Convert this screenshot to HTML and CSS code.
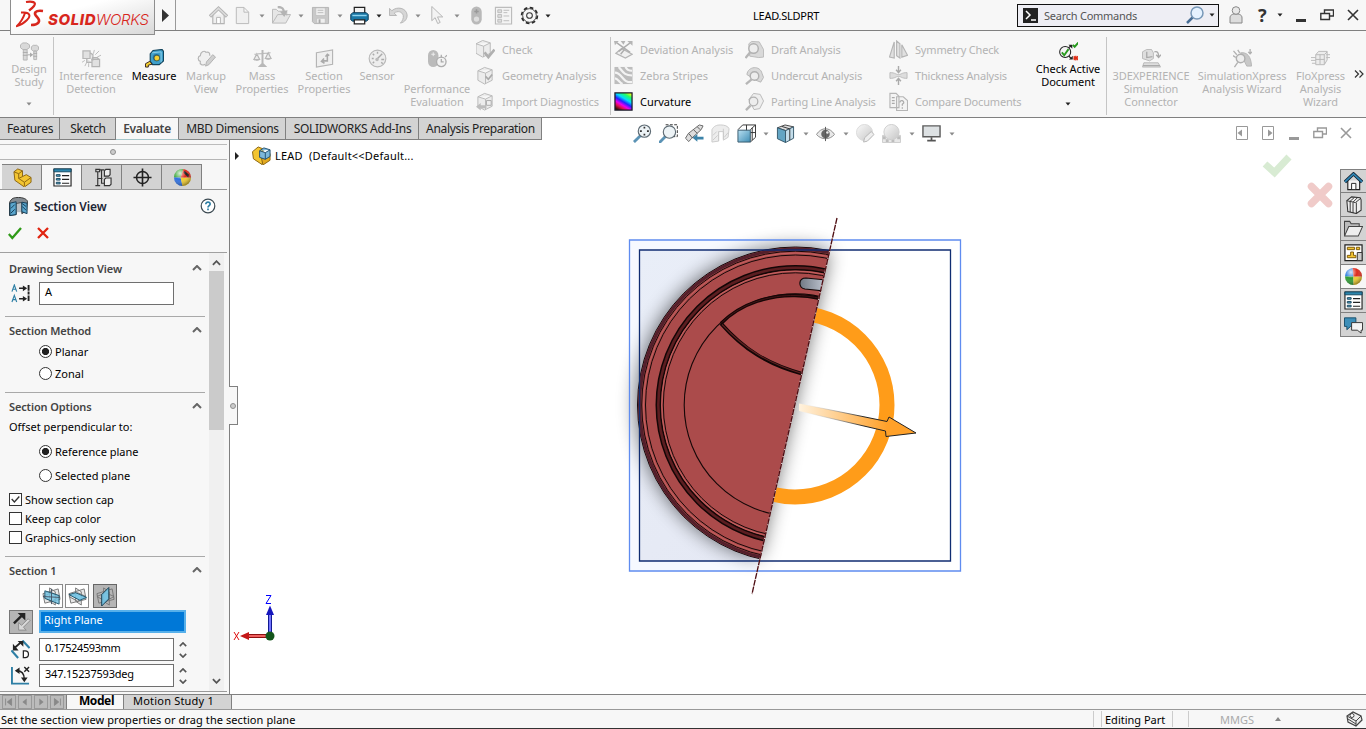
FILE: index.html
```html
<!DOCTYPE html>
<html lang="en">
<head>
<meta charset="utf-8">
<title>LEAD.SLDPRT</title>
<link rel="stylesheet" href="styles.css">
</head>
<body>
<svg class="defs" width="0" height="0">
  <defs>
    <linearGradient id="gBlue" x1="0" y1="0" x2="1" y2="1"><stop offset="0" stop-color="#b9e0f2"/><stop offset="1" stop-color="#3f8db4"/></linearGradient>
    <linearGradient id="gGrey" x1="0" y1="0" x2="1" y2="1"><stop offset="0" stop-color="#fafafa"/><stop offset="1" stop-color="#c6c6c6"/></linearGradient>
    <linearGradient id="gRain" x1=".8" y1="0" x2=".2" y2="1"><stop offset="0" stop-color="#df2"/><stop offset=".15" stop-color="#2f6"/><stop offset=".35" stop-color="#0df"/><stop offset=".52" stop-color="#22f"/><stop offset=".68" stop-color="#e0e"/><stop offset=".82" stop-color="#e01050"/><stop offset="1" stop-color="#310"/></linearGradient>
    <radialGradient id="gShine" cx=".35" cy=".25" r=".8"><stop offset="0" stop-color="#fff" stop-opacity=".8"/><stop offset=".45" stop-color="#fff" stop-opacity="0"/><stop offset="1" stop-color="#000" stop-opacity=".45"/></radialGradient>
  </defs>
  <symbol id="caret" viewBox="0 0 6 4"><path d="M.5 .5h5L3 3.5z" fill="currentColor"/></symbol>
  <symbol id="home" viewBox="0 0 20 20"><path d="M4 9v9.500h12V9" fill="#efefef" stroke="#b4b4b4" stroke-width="1.200"/><path d="M1 11 10 2.500l9 8.500" fill="none" stroke="#b4b4b4" stroke-width="3.600"/><path d="M1.500 10.500 10 2.500l8.500 8" fill="none" stroke="#dcdcdc" stroke-width="1.600"/><path d="M8 18v-6h4v6" fill="#fff" stroke="#b4b4b4"/></symbol>
  <symbol id="newdoc" viewBox="0 0 20 20"><path d="M3.500 1.500h8l5 5v12h-13zM11.500 1.500v5h5" fill="#f0f0f0" stroke="#b8b8b8"/></symbol>
  <symbol id="open" viewBox="0 0 20 20"><path d="M.5 18V3.500h4l2 2h9V10M.5 18 6 9h13.500l-5 9z" fill="#e6e6e6" stroke="#b8b8b8"/><path d="M6 1c5 0 6 2 6.500 5" fill="none" stroke="#b4b4b4" stroke-width="2.500"/><path d="m8.500 6 8-1.500-3.500 7z" fill="#b4b4b4"/></symbol>
  <symbol id="save" viewBox="0 0 20 20"><path d="M1.500 1.500h17v17h-15l-2-2z" fill="#c9c9c9" stroke="#b3b3b3"/><path d="M5 2h10v8H5zM6 13h9v5H6z" fill="#efefef" stroke="#bbb" stroke-width=".7"/><path d="M7 4.500h6M7 7h6" stroke="#bbb"/><path d="M8 14h2v4H8z" fill="#aaa"/></symbol>
  <symbol id="print" viewBox="0 0 20 20"><path d="M4.500 8V1.500h11V8z" fill="#f3f3f3" stroke="#222" stroke-width="1.300"/><path d="m.8 9 2-2h14.400l2 2v5.500l-2 1.500H2.800L.8 14.500z" fill="#1a78a6" stroke="#0f3c58" stroke-width="1"/><path d="M2.500 10h15" stroke="#8dd2ef" stroke-width="1.500"/><path d="M4.500 14.500h11v4.200h-11z" fill="#fff" stroke="#222" stroke-width="1.300"/></symbol>
  <symbol id="undo" viewBox="0 0 20 20"><path d="M.5 2.500V10H8L5.500 7.500C9 4.500 14 6 15 10c.5 3-1 6-3 8 5-1 7.500-5 7-9-1-7-10.500-9-16-4z" fill="#d6d6d6" stroke="#b5b5b5"/></symbol>
  <symbol id="select" viewBox="0 0 20 20"><path d="M4 .5v15l3.500-3.200 2.700 6.200 2.600-1.200-2.800-5.800h5.500z" fill="#f3f3f3" stroke="#b3b3b3"/></symbol>
  <symbol id="traffic" viewBox="0 0 20 20"><rect x="4.500" y=".5" width="11" height="19" rx="5.500" fill="#b9b9b9"/><path d="M10 3.500v4.500M7.700 5.700h4.600" stroke="#999" stroke-width="1.600"/><circle cx="10" cy="13.800" r="2.800" fill="#dedede"/></symbol>
  <symbol id="listopt" viewBox="0 0 20 20"><path d="M1.500 1.500h17v17.500h-17z" fill="#f4f4f4" stroke="#bcbcbc" stroke-width="1.200"/><path d="M4 4h4v3H4zM4 9h4v3H4zM4 14h4v3H4zM10 4.500h6M10 7h4M10 10.500h6M10 15.500h6" fill="#ddd" stroke="#bcbcbc"/></symbol>
  <symbol id="gear" viewBox="0 0 20 20"><circle cx="10" cy="10" r="8.300" fill="none" stroke="#2b2b2b" stroke-width="1.800" stroke-dasharray="3.900 2.619"/><circle cx="10" cy="10" r="7.200" fill="#f7f7f7" stroke="#2b2b2b" stroke-width=".9"/><circle cx="10" cy="10" r="3" fill="none" stroke="#333" stroke-width="1.100"/></symbol>
  <symbol id="bolts" viewBox="0 0 20 20"><path d="M.5 3 3 1h4l3 2v3L7 8H3L.5 6zM3.500 8h4v11h-4zM12 5l2-1.500h3.500l2 1.500v3l-2 1.500H14L12 8zM14.500 9.500h3v9h-3z" fill="#d9d9d9" stroke="#b5b5b5"/><path d="M3 11h5M3 14h5M14 12h4M14 15h4M8 13.500h4" stroke="#aaa"/><path d="m10.500 11 3.500 2.500-3.500 2.500z" fill="#aaa"/></symbol>
  <symbol id="interf" viewBox="0 0 20 20"><path d="M1 2h7.500v8H1zM10.500 11h8v7.500h-8zM8.500 4l3 2v6M10 12l1-3h5l2 2M5 10v4h5" fill="#e1e1e1" stroke="#b5b5b5" stroke-width="1.300"/><path d="m12 5 1-4M14 6l4-4M16 8.500l4-2M5 14l-2 4M7 15v4M3 12l-3 2" stroke="#bbb"/></symbol>
  <symbol id="measure" viewBox="0 0 20 20"><path d="M5.500 5 8.500 1.500l9.500-1 1.500 2v10L15 16.500H8L5.500 13z" fill="#3e9fca" stroke="#12445c" stroke-width="1.200"/><path d="m7.500 4 9.500-1v11" fill="none" stroke="#8fd0e8"/><circle cx="12" cy="9" r="3.800" fill="#2a7298"/><circle cx="12.500" cy="9.500" r="3" fill="#f3cf31" stroke="#244" stroke-width=".7"/><path d="M.5 15.500 5 13l2.500 3-4 1v2h-3z" fill="#f3cf31" stroke="#322"/></symbol>
  <symbol id="markup" viewBox="0 0 20 20"><path d="M8.500 16c-3 2-6 0-5-3-3-1-3-5 0-6 0-4 4-6 6-3.500 3-1 4 1 4 3.500" fill="#f0f0f0" stroke="#b5b5b5" stroke-width="1.200"/><path d="m9 18 1-4.500 6.500-7.500 3 2.500-7 8z" fill="#d0d0d0" stroke="#b0b0b0"/></symbol>
  <symbol id="scale" viewBox="0 0 20 20"><path d="M10 1v14M1.500 5.500 18.500 4M4 5 1 11h6zM16 4l-3 6h6z" fill="#ececec" stroke="#b5b5b5" stroke-width="1.200"/><path d="M9 1h2v14l4 4H5l4-4z" fill="#b8b8b8"/><path d="M.5 11h7c-1 2-6 2-7 0zM12.500 10h7c-1 2-6 2-7 0z" fill="#bdbdbd"/></symbol>
  <symbol id="secprop" viewBox="0 0 20 20"><path d="m1.500 4 17-3v15l-17 3z" fill="#efefef" stroke="#b5b5b5" stroke-width="1.200"/><path d="M13 6v6.500H7.500m2-2.500-2.700 3L10 15M11 8l2-2.500L15 7" fill="none" stroke="#aaa" stroke-width="1.600"/></symbol>
  <symbol id="sensor" viewBox="0 0 20 20"><circle cx="10" cy="10" r="8.800" fill="#ededed" stroke="#b8b8b8" stroke-width="1.200"/><path d="m9 11 6-6M10 3v2M4 10h2M14 11h3M5 5l1.500 1.500M5 15l1.500-1.500M14 14l1.500 1.500" stroke="#aaa" stroke-width="1.500"/><circle cx="9.500" cy="11" r="1.800" fill="#bbb"/></symbol>
  <symbol id="perf" viewBox="0 0 20 20"><rect x="0" y="1" width="11" height="18" rx="5.500" fill="#bbb"/><path d="M5.500 3.500v4M3.500 5.500h4" stroke="#eee"/><circle cx="14" cy="13.500" r="5" fill="#f2f2f2" stroke="#adadad" stroke-width="1.400"/><path d="M14 6v3M14 10.500v3h2.500M18 8.500l2-2" stroke="#aaa" stroke-width="1.300" fill="none"/></symbol>
  <symbol id="cube" viewBox="0 0 20 20"><path d="m2 5 7-3.500 8 2.500v11l-8 4-7-4zM2 5l8 2.500 7-3.500M10 7.500V19" fill="#ececec" stroke="#b8b8b8"/></symbol>
  <symbol id="check" viewBox="0 0 20 20"><g transform="translate(-2 -1)"><use href="#cube" width="20" height="20"/></g><path d="m9 13 4 5 6.500-8" fill="none" stroke="#b0b0b0" stroke-width="2.800"/></symbol>
  <symbol id="geom" viewBox="0 0 20 20"><use href="#cube" width="20" height="20"/><path d="m10 11 3 3 4-5" fill="none" stroke="#aaa" stroke-width="1.800"/></symbol>
  <symbol id="import" viewBox="0 0 20 20"><use href="#cube" width="20" height="20"/><path d="M11 9h5v5h-5z" fill="#eee" stroke="#aaa"/><path d="m0 15.500 5-4V14h6v3H5v2.500z" fill="#bdbdbd"/></symbol>
  <symbol id="deviation" viewBox="0 0 20 20"><path d="m2 14 6-5 11 6-7 4z" fill="#f0f0f0" stroke="#b5b5b5" stroke-width="1.300"/><path d="m7 15 4-5M3 3l14 10M17 3 5 12" stroke="#adadad" stroke-width="1.500"/><path d="M0 1h5L1 5.500zM14 1h5.500v5zM7 1h5l-2 4z" fill="#b5b5b5"/></symbol>
  <symbol id="zebra" viewBox="0 0 20 20"><path d="M.5 1h19v18H.5z" fill="#bdbdbd"/><path d="M1 7c8 0 7 11 18 10M5 1c5 6 6 9 14 9M12 1c2 3 3 4 7 4M1 13c3 0 4 4 8 6" fill="none" stroke="#f3f3f3" stroke-width="2.300"/></symbol>
  <symbol id="curv" viewBox="0 0 20 20"><path d="M1 1h18v18H1z" fill="url(#gRain)" stroke="#1a1a2a" stroke-width="1.300"/></symbol>
  <symbol id="lens" viewBox="0 0 20 20"><path d="m4 4 3-2.500 8 .5 4.500 8v8l-5 .5L5 17z" fill="#d9d9d9" stroke="#bbb"/><circle cx="9" cy="9" r="5" fill="#ededed" stroke="#b0b0b0" stroke-width="1.500"/><path d="m5.500 13-5 6" stroke="#b6b6b6" stroke-width="2.500"/></symbol>
  <symbol id="lens2" viewBox="0 0 20 20"><path d="M2 9C3 0 16-1 18 8l1.500 4-3 5-5-2z" fill="#d9d9d9" stroke="#b5b5b5"/><circle cx="10" cy="10.500" r="4.500" fill="#ededed" stroke="#b0b0b0" stroke-width="1.500"/><path d="m7 14-6 5" stroke="#b6b6b6" stroke-width="2.500"/></symbol>
  <symbol id="lens3" viewBox="0 0 20 20"><path d="m4 8 5-6.500 7 1 3.500 7-4 8-6 1z" fill="#eee" stroke="#b8b8b8"/><circle cx="9" cy="10" r="4.500" fill="#ededed" stroke="#b0b0b0" stroke-width="1.300"/><path d="m6 14-5 5" stroke="#b6b6b6" stroke-width="2.500"/></symbol>
  <symbol id="symm" viewBox="0 0 20 20"><path d="M.5 18 5.500 2v17zM8 1l3.500 3v15L8 16.500zM13.500 5l6 11-6 2z" fill="#e0e0e0" stroke="#b5b5b5" stroke-width="1.200"/></symbol>
  <symbol id="thick" viewBox="0 0 20 20"><path d="M1 7c6 0 6 2 9 2s3-2 9-2v6c-6 0-6-2-9-2s-3 2-9 2z" fill="#ddd" stroke="#bbb"/><path d="M10 0v6M10 20v-6M7.500 4 10 7l2.500-3M7.500 16l2.500-3 2.500 3" fill="none" stroke="#aaa" stroke-width="1.500"/></symbol>
  <symbol id="compare" viewBox="0 0 20 20"><path d="M1 1.500h6.500l3 3v12H1zM8 5h7l4.500 4v10.500H8z" fill="#f3f3f3" stroke="#b5b5b5" stroke-width="1.200"/><path d="M3 6h3M3 9h3M3 12h3M11.500 11c0-3 4.500-2 4 .5L14 13v1.500M14 16v1.500" fill="none" stroke="#aaa" stroke-width="1.300"/></symbol>
  <symbol id="active" viewBox="0 0 20 20"><circle cx="6.500" cy="10.500" r="5.800" fill="#f4f4f4" stroke="#222" stroke-width="1.100"/><path d="m10 6 3-2M10.500 15l2 2" stroke="#222" stroke-width="1.300"/><path d="M10 3h4v4zM10.500 18.500h4v-4z" fill="#222"/><path d="m3 11 2.500 3L10 7.500M14.500 3 16.500 5 20.500.5" fill="none" stroke="#289a1e" stroke-width="2"/><path d="m15.500 15 4.500 4M20 15l-4.500 4M17.700 14.500v5M15 17h5.500" stroke="#df2d16" stroke-width="1.200"/></symbol>
  <symbol id="dx" viewBox="0 0 20 20"><path d="M.5 3 5 .5h5l2 3.500v6l-4 2.500L.5 10zM2 14.500h15l2.500 4.500H.5z" fill="#dedede" stroke="#b8b8b8"/><path d="M5 3v6l6-1M13 3c4-1 4.500 2 4.500 5m-2.500-2 2.500 3L20 6M1 17.500h18" fill="none" stroke="#aaa" stroke-width="1.400"/></symbol>
  <symbol id="simx" viewBox="0 0 20 20"><path d="M8 4c7-1 11 4 11.500 14h-5L11 11z" fill="#c8c8c8" stroke="#b5b5b5"/><circle cx="8" cy="10" r="4.500" fill="#eee" stroke="#b0b0b0" stroke-width="1.500"/><path d="m5 14-3.500 5M.5 2 4 6M5 1l2 3M0 7l3 2M18 0v5m-2-2 2 2 2-2" fill="none" stroke="#b0b0b0" stroke-width="1.400"/></symbol>
  <symbol id="flox" viewBox="0 0 20 20"><path d="m5 6 3-3.500h9v9l-3 5H5zM5 6h9v10M9.500 6v10M5 11h9M14 6l3-3" fill="#ececec" stroke="#b8b8b8"/><path d="M0 9h5M0 12h5M1 15h4M16 6h4M16 9h4" stroke="#bbb"/></symbol>
  <symbol id="mag" viewBox="0 0 20 20"><path d="m8 12-7 7" stroke="#5b93b5" stroke-width="3"/><circle cx="12" cy="7.500" r="6.500" fill="#edf3f6" stroke="#5d6a73" stroke-width="1.200"/></symbol>
  <symbol id="fit" viewBox="0 0 20 20"><use href="#mag" width="20" height="20"/><path d="M12 2.800v2M12 10.200v2M7.300 7.500h2M14.700 7.500h2" stroke="#333" stroke-width="1.800"/></symbol>
  <symbol id="area" viewBox="0 0 20 20"><path d="M7 .8h12.300v12.500h-5" fill="none" stroke="#333" stroke-dasharray="3 1.500"/><g transform="translate(-1 1)"><use href="#mag" width="20" height="20"/></g></symbol>
  <symbol id="prev" viewBox="0 0 20 20"><path d="m.5 15 3-5L15 1l4 1-2 4L7 15l-3 3.500z" fill="#ddd" stroke="#666"/><path d="m4 10 4 5M9 6l4 4M13 3l3 3" stroke="#555"/><path d="m8 14.500 5-4v2.800h6.500v3H13v2.500z" fill="#3c83a9"/></symbol>
  <symbol id="section" viewBox="0 0 20 20"><path d="M1 6c2-4 5-5 9-5s8 1 9 4l-1 9-5 3V8L8 8v10l-7 1z" fill="#ededed" stroke="#cacaca"/><path d="M8 8V18M13 5v11M2 12l4-4M2 17l5-5M14 14l4-5" stroke="#cacaca"/></symbol>
  <symbol id="orient" viewBox="0 0 20 20"><path d="M6 1h13.500v13M1 6l5-5M14 6l5.500-5M14 19l5.500-5M10 1v17M14 9h5.500M16 4v13" fill="none" stroke="#333"/><path d="M1 6.500h13v12.500H1z" fill="url(#gBlue)" stroke="#37586b"/></symbol>
  <symbol id="shade" viewBox="0 0 20 20"><path d="m1.500 4 8-3 9 2-8 4z" fill="#ddd" stroke="#444"/><path d="m1.500 4 8.500 3v12.500l-8.500-4z" fill="#63a5c4" stroke="#36596c"/><path d="m10 7 8.500-4v12L10 19.500z" fill="#c3ddea" stroke="#36596c"/><path d="M14.500 5v12M6 2.500l8 2.500" stroke="#333"/></symbol>
  <symbol id="eye" viewBox="0 0 20 20"><path d="M.5 11c5-8 14-8 19 0-5 6-14 6-19 0z" fill="#e9e9e9" stroke="#8c8c8c"/><circle cx="10" cy="10.500" r="4.500" fill="#666"/><circle cx="12" cy="9" r="1.300" fill="#eee"/><path d="M10 3v15" stroke="#555"/></symbol>
  <symbol id="ballpen" viewBox="0 0 20 20"><circle cx="9" cy="9" r="8.500" fill="url(#gGrey)" stroke="#dadada"/><path d="m8 19 1-4.500 7-6.500 3 3-7 7z" fill="#eee" stroke="#b5b5b5"/></symbol>
  <symbol id="scene" viewBox="0 0 20 20"><path d="M.5 12h19v7.500H.5z" fill="#e8e8e8" stroke="#ccc"/><path d="M1 13h3v3H1zM16 13h3v3h-3zM4 16h3v3H4zM10 16h3v3h-3z" fill="#bdbdbd"/><circle cx="10" cy="8.500" r="8" fill="url(#gGrey)" stroke="#ccc"/></symbol>
  <symbol id="monitor" viewBox="0 0 20 20"><path d="M1 2h18v11.500H1z" fill="#dde1e3" stroke="#5c5c5c" stroke-width="1.500"/><path d="M10 14v3M5.500 17.500h9" stroke="#555" stroke-width="1.800"/></symbol>
  <symbol id="part" viewBox="0 0 20 20"><path d="m1 4 4-3 5 2v6l4-2 5 3v5l-7 5-10-7z" fill="#f3c531" stroke="#8a6410"/><path d="m1 4 5 2v5l6 4v4M6 6l4-3M12 15l7-5M6 11l4-2" fill="none" stroke="#8a6410"/></symbol>
  <symbol id="partb" viewBox="0 0 20 20"><path d="m.5 6 6-5 5 2v13l-1 3.500-9-6z" fill="#f3c531" stroke="#8a6410"/><path d="m10 13 9-5v7l-7.500 5z" fill="#e3a91f" stroke="#8a6410"/><path d="m8 5 4.500-3 6.500 2v7l-5 3-6-2zM8 5l6 2 5-3M14 7v7" fill="#7db8dc" stroke="#204f70"/></symbol>
  <symbol id="plist" viewBox="0 0 20 20"><path d="M1 1h18v18H1z" fill="#fff" stroke="#222" stroke-width="1.200"/><path d="M1 1h18v3H1z" fill="#2c86ad" stroke="#164a64"/><path d="M3.500 7h4v1.700h-4zM3.500 11h4v1.700h-4zM3.500 15h4v1.700h-4z" fill="#59acd0" stroke="#17455c"/><path d="M9.500 8H17M9.500 12H17M9.500 16H17" stroke="#222" stroke-width="1.200"/></symbol>
  <symbol id="config" viewBox="0 0 20 20"><path d="M3 1.500h4V4H3zM5 4v14M2.500 18.500h5M5 11h5M9 2v14h3M7 2h5" fill="none" stroke="#333" stroke-width="1.200"/><path d="m12 3 1.500-1.500H18V7l-1.500 1.500H12zM12 12l1.500-1.500H19V17l-1.500 1.500H12z" fill="#eee" stroke="#333" stroke-width="1.200"/></symbol>
  <symbol id="target" viewBox="0 0 20 20"><circle cx="10" cy="10" r="6.300" fill="none" stroke="#222" stroke-width="1.600"/><path d="M10 .5v19M.5 10h19" stroke="#222" stroke-width="1.700"/></symbol>
  <symbol id="ball" viewBox="0 0 20 20"><path d="M10 10 9 1A9 9 0 0 0 1 10z" fill="#2d7fe0"/><path d="M10 10H1a9 9 0 0 0 9 9z" fill="#2d9c32"/><path d="M10 10v9a9 9 0 0 0 9-9z" fill="#f1cc2c"/><path d="M10 10h9A9 9 0 0 0 9 1z" fill="#dd2a1c"/><circle cx="10" cy="10" r="8.900" fill="url(#gShine)"/></symbol>
  <symbol id="ballcut" viewBox="0 0 20 20"><path d="M8 10 11 1A9 9 0 0 0 1 10z" fill="#46ad42"/><path d="M8 10H1a9 9 0 0 0 9 9z" fill="#2d6fe0"/><path d="M8 10l2 9a9 9 0 0 0 9-9z" fill="#f1cc2c"/><path d="M8 10h11A9 9 0 0 0 11 1z" fill="#dd2a1c"/><path d="m12 3 5 4-1 3-5-5z" fill="#1f1f1f"/><circle cx="10" cy="10" r="8.900" fill="url(#gShine)"/></symbol>
  <symbol id="secview" viewBox="0 0 20 20"><path d="M.5 6c2-5 5-5.500 9.500-5.500s8.500 1.500 9.500 4l-1 10-5 3V6L7.500 7v11.500l-7 1z" fill="#858c92" stroke="#333"/><path d="M8 7h5v9H8z" fill="#b9bfc3"/><path d="m1 6.500 6.500-1.500v13.500L1 19.500zM13.500 5.500l5.500 1v11l-5.500-2z" fill="#5aa6cd" stroke="#143c55"/><path d="m2 12 4-4M2 17l4-4M14 10l4 4M14 7l4 3" stroke="#143c55"/></symbol>
  <symbol id="alet" viewBox="0 0 20 20"><path d="m1 8 2.500-7L6 8M2 5.500h3M1 19l2.500-7L6 19M2 16.500h3" fill="none" stroke="#2e7fa5" stroke-width="1.200"/><path d="M8.500 4.500h6M8.500 15.500h6" stroke="#222" stroke-width="1.600"/><path d="m12.500 1.500 4.500 3-4.500 3zM12.500 12.500l4.500 3-4.500 3z" fill="#222"/><path d="M18.500 1v18" stroke="#222" stroke-width="2" stroke-dasharray="6 1 3 1"/></symbol>
  <symbol id="planes" viewBox="0 0 20 20"><path d="m1 7 16-5 2 11-16 4zM8 1l6 4v14l-6-4zM1 10l9-4 9 4-9 5z" fill="#bbb" fill-opacity=".35" stroke="#777"/></symbol>
  <symbol id="pl1" viewBox="0 0 20 20"><use href="#planes" width="20" height="20"/><path d="m3 4 15 5v9L3 12z" fill="#72c4e5" fill-opacity=".8" stroke="#21566e"/><path d="m1 10 18 1M10 2v16" stroke="#456"/></symbol>
  <symbol id="pl2" viewBox="0 0 20 20"><use href="#planes" width="20" height="20"/><path d="m1 8 7-2 11.500 5-7 3z" fill="#72c4e5" fill-opacity=".9" stroke="#21566e"/></symbol>
  <symbol id="pl3" viewBox="0 0 20 20"><use href="#planes" width="20" height="20"/><path d="m6 8 7.500-7.500v12L6 20z" fill="#72c4e5" fill-opacity=".9" stroke="#153b4e"/></symbol>
  <symbol id="flip" viewBox="0 0 20 20"><path d="m2 11 8-8" stroke="#222" stroke-width="2.500"/><path d="M6 0h8v8z" fill="#222"/><path d="M19 8l-7 7 3 3H7v-8l3 3 7-7z" fill="#d9d9d9" stroke="#8a8a8a"/></symbol>
  <symbol id="dist" viewBox="0 0 20 20"><path d="m.5 11 7 8M12 .5l7.500 8" stroke="#2e7fa5" stroke-width="2.200"/><path d="m3 9 8-7" stroke="#222" stroke-width="2"/><path d="M2 4v7h6zM7 1h6v6z" fill="#222"/><path d="M13 11.500h2c4.500 0 4.500 7 0 7h-2z" fill="#fff" stroke="#222" stroke-width="1.300"/></symbol>
  <symbol id="angle" viewBox="0 0 20 20"><path d="M1 1v17.500h18" fill="none" stroke="#2e7fa5" stroke-width="2"/><path d="M6 5c5 0 8 3 8 9M14 1l5 5M19 1l-5 5" fill="none" stroke="#222" stroke-width="1.500"/><path d="m4 5 5-3.500v7zM10.500 12h7l-3.500 5z" fill="#222"/></symbol>
  <symbol id="up" viewBox="0 0 10 6"><path d="m1 5 4-4 4 4" fill="none" stroke="currentColor" stroke-width="2"/></symbol>
  <symbol id="down" viewBox="0 0 10 6"><path d="m1 1 4 4 4-4" fill="none" stroke="currentColor" stroke-width="2"/></symbol>
  <symbol id="min" viewBox="0 0 14 14"><path d="M2 12.500h10" stroke="currentColor" stroke-width="3"/></symbol>
  <symbol id="restore" viewBox="0 0 14 14"><path d="M4.500 5V2h9v6H9.500M.800 5.500h8.700v6H.800z" fill="none" stroke="currentColor" stroke-width="1.400"/></symbol>
  <symbol id="close" viewBox="0 0 14 14"><path d="m2 2 10 10M12 2 2 12" stroke="currentColor" stroke-width="1.600"/></symbol>
  <symbol id="paneL" viewBox="0 0 14 14"><path d="M1.500 .500h11v13h-11z" fill="none" stroke="currentColor"/><path d="M7 3.500v7L2.500 7z" fill="currentColor"/></symbol>
  <symbol id="paneR" viewBox="0 0 14 14"><path d="M1.500 .500h11v13h-11z" fill="none" stroke="currentColor"/><path d="M7 3.500v7L11.500 7z" fill="currentColor"/></symbol>
  <symbol id="thome" viewBox="0 0 20 20"><path d="M4 9v9.500h12.500V9" fill="#f3f3f3" stroke="#222" stroke-width="1.200"/><path d="M1 10.500 10 2l9 8.500" fill="none" stroke="#123" stroke-width="3.500"/><path d="M1 10.500 10 2l9 8.500" fill="none" stroke="#2f86b4" stroke-width="1.800"/><path d="M8 18v-6h4.500v6" fill="#fff" stroke="#222"/></symbol>
  <symbol id="books" viewBox="0 0 20 20"><path d="m3 6 5-4 9 1 1 2v11l-5 3.500-9-2z" fill="#eee" stroke="#333" stroke-width="1.100"/><path d="M3 6l9 2 5-4M13 8v11M6 7l5-4.500M9.500 7.500 14 3M6.500 7v11M9.500 8v11" fill="none" stroke="#333"/></symbol>
  <symbol id="folder" viewBox="0 0 20 20"><path d="M.5 18V2.500H6l1.500 2.500H16v3" fill="#bbb" stroke="#444" stroke-width="1.100"/><path d="M.5 18 5 8h14.500L15 18z" fill="#eee" stroke="#444" stroke-width="1.100"/></symbol>
  <symbol id="palette" viewBox="0 0 20 20"><path d="M1 2h18v16.500H1z" fill="#fff" stroke="#222" stroke-width="1.300"/><path d="M3.500 4.500H11V7H3.500zM13 4.500h3.500V7H13zM7 9.500h3V13h2.500v2.500h-9V13H7z" fill="#f3c531" stroke="#7a5708"/><path d="M14 10h5v8.500h-5z" fill="#ccc" stroke="#333"/></symbol>
  <symbol id="chat" viewBox="0 0 20 20"><path d="M.5 3h12v9H7l-4 3.500V12H.5z" fill="#3d8fb9" stroke="#174c68"/><path d="M8 8h11.500v8H18v3l-4-3H8z" fill="#f4f4f4" stroke="#333"/></symbol>
</svg>

<header class="titlebar">
  <div class="brand">
    <svg class="ds" viewBox="0 0 28 28" fill="none" stroke="#d8261c"><path d="M10 2c6-1 11 0 8 4-1.500 2-3 3-5 4.500" stroke-width="2.200"/><path d="M5 12.500h3c6 0 7 4 3 7.500-3 3-6 5-10 6 3-3 6-7 8-13" stroke-width="2"/><path d="M27 11c-8-1-10 2-6 6 4 4 2 8-6 8" stroke-width="2.600"/></svg>
    <span class="brand-name"><b>SOLID</b><i>WORKS</i></span>
  </div>
  <svg class="brand-arrow" viewBox="0 0 8 13"><path d="M0 0v13l7-6.500z" fill="#333"/></svg>
  <nav class="quick">
    <span class="q-home"><svg><use href="#home"/></svg></span>
    <span class="q"><svg><use href="#newdoc"/></svg></span><svg class="caret dim"><use href="#caret"/></svg>
    <span class="q"><svg><use href="#open"/></svg></span><svg class="caret dim"><use href="#caret"/></svg>
    <span class="q"><svg><use href="#save"/></svg></span><svg class="caret dim"><use href="#caret"/></svg>
    <span class="q"><svg><use href="#print"/></svg></span><svg class="caret"><use href="#caret"/></svg>
    <span class="q"><svg><use href="#undo"/></svg></span><svg class="caret dim"><use href="#caret"/></svg>
    <span class="q"><svg><use href="#select"/></svg></span><svg class="caret dim"><use href="#caret"/></svg>
    <span class="q wide"><svg><use href="#traffic"/></svg></span>
    <span class="q"><svg><use href="#listopt"/></svg></span>
    <span class="q q-gear"><svg><use href="#gear"/></svg></span><svg class="caret"><use href="#caret"/></svg>
  </nav>
  <div class="doc-title">LEAD.SLDPRT</div>
  <div class="search">
    <svg class="prompt" viewBox="0 0 15 15"><path d="M0 0h15v15H0z" fill="#222"/><path d="m3 3 4 4-4 4M8 12h5" fill="none" stroke="#fff" stroke-width="1.500"/></svg>
    <span class="search-text">Search Commands</span>
    <svg class="search-mag" viewBox="0 0 18 18"><path d="m7 11-6 6" stroke="#486e95" stroke-width="2.500"/><circle cx="11" cy="7" r="6" fill="#e5f2ff" stroke="#7798b8" stroke-width="1.500"/></svg>
    <svg class="caret"><use href="#caret"/></svg>
  </div>
  <svg class="user" viewBox="0 0 14 18"><path d="M1 17v-5c0-3 2-4 6-4s6 1 6 4v5z" fill="#ddd" stroke="#888"/><circle cx="7" cy="4.500" r="3.800" fill="#e8e8e8" stroke="#888"/></svg>
  <span class="help">?</span>
  <svg class="caret"><use href="#caret"/></svg>
  <div class="win"><svg><use href="#min"/></svg><svg><use href="#restore"/></svg><svg><use href="#close"/></svg></div>
</header>

<section class="ribbon">
  <div class="cmd tall w-design"><svg class="ic"><use href="#bolts"/></svg><span>Design<br>Study</span><svg class="caret dim drop"><use href="#caret"/></svg></div>
  <div class="sep"></div>
  <div class="cmd w-inter"><svg class="ic"><use href="#interf"/></svg><span>Interference<br>Detection</span></div>
  <div class="cmd on w-small"><svg class="ic"><use href="#measure"/></svg><span>Measure</span></div>
  <div class="cmd w-small"><svg class="ic"><use href="#markup"/></svg><span>Markup<br>View</span></div>
  <div class="cmd w-mass"><svg class="ic"><use href="#scale"/></svg><span>Mass<br>Properties</span></div>
  <div class="cmd w-sect"><svg class="ic"><use href="#secprop"/></svg><span>Section<br>Properties</span></div>
  <div class="cmd w-sens"><svg class="ic"><use href="#sensor"/></svg><span>Sensor</span></div>
  <div class="cmd low w-perf"><svg class="ic"><use href="#perf"/></svg><span>Performance<br>Evaluation</span></div>
  <div class="stack s1">
    <div class="line"><svg class="ic"><use href="#check"/></svg>Check</div>
    <div class="line"><svg class="ic"><use href="#geom"/></svg>Geometry Analysis</div>
    <div class="line"><svg class="ic"><use href="#import"/></svg>Import Diagnostics</div>
  </div>
  <div class="sep"></div>
  <div class="stack s2">
    <div class="line"><svg class="ic"><use href="#deviation"/></svg>Deviation Analysis</div>
    <div class="line"><svg class="ic"><use href="#zebra"/></svg>Zebra Stripes</div>
    <div class="line on"><svg class="ic"><use href="#curv"/></svg>Curvature</div>
  </div>
  <div class="stack s3">
    <div class="line"><svg class="ic"><use href="#lens"/></svg>Draft Analysis</div>
    <div class="line"><svg class="ic"><use href="#lens2"/></svg>Undercut Analysis</div>
    <div class="line"><svg class="ic"><use href="#lens3"/></svg>Parting Line Analysis</div>
  </div>
  <div class="stack s4">
    <div class="line"><svg class="ic"><use href="#symm"/></svg>Symmetry Check</div>
    <div class="line"><svg class="ic"><use href="#thick"/></svg>Thickness Analysis</div>
    <div class="line"><svg class="ic"><use href="#compare"/></svg>Compare Documents</div>
  </div>
  <div class="cmd tall on w-active"><svg class="ic"><use href="#active"/></svg><span>Check Active<br>Document</span><svg class="caret drop"><use href="#caret"/></svg></div>
  <div class="sep"></div>
  <div class="cmd w-dx"><svg class="ic"><use href="#dx"/></svg><span>3DEXPERIENCE<br>Simulation<br>Connector</span></div>
  <div class="cmd w-simx"><svg class="ic"><use href="#simx"/></svg><span>SimulationXpress<br>Analysis Wizard</span></div>
  <div class="cmd w-flox"><svg class="ic"><use href="#flox"/></svg><span>FloXpress<br>Analysis<br>Wizard</span></div>
  <svg class="more" viewBox="0 0 10 8"><path d="m1 .500 3.500 3.500L1 7.500M5.500.500 9 4 5.500 7.500" fill="none" stroke="#333" stroke-width="1.200"/></svg>
</section>

<div class="tabrow">
  <nav class="tabs">
    <span class="tab t1">Features</span><span class="tab t2">Sketch</span><span class="tab t3 active">Evaluate</span><span class="tab t4">MBD Dimensions</span><span class="tab t5">SOLIDWORKS Add-Ins</span><span class="tab t6">Analysis Preparation</span>
  </nav>
  <div class="headsup">
    <span class="h"><svg><use href="#fit"/></svg></span><span class="h"><svg><use href="#area"/></svg></span><span class="h"><svg><use href="#prev"/></svg></span><span class="h"><svg><use href="#section"/></svg></span><span class="h"><svg><use href="#orient"/></svg></span><svg class="caret dim"><use href="#caret"/></svg>
    <span class="h hw"><svg><use href="#shade"/></svg></span><svg class="caret dim"><use href="#caret"/></svg>
    <span class="h hw"><svg><use href="#eye"/></svg></span><svg class="caret dim"><use href="#caret"/></svg>
    <span class="h"><svg><use href="#ballpen"/></svg></span><span class="h hw"><svg><use href="#scene"/></svg></span><svg class="caret dim"><use href="#caret"/></svg>
    <span class="h hw"><svg><use href="#monitor"/></svg></span><svg class="caret dim"><use href="#caret"/></svg>
  </div>
  <div class="docwin"><svg><use href="#paneL"/></svg><svg><use href="#paneR"/></svg><svg><use href="#min"/></svg><svg><use href="#restore"/></svg><svg><use href="#close"/></svg></div>
</div>

<main class="work">
  <aside class="panel">
    <div class="grip"><i class="dot"></i></div>
    <nav class="ptabs">
      <span class="ptab"><svg><use href="#part"/></svg></span><span class="ptab sel"><svg><use href="#plist"/></svg></span><span class="ptab"><svg><use href="#config"/></svg></span><span class="ptab"><svg><use href="#target"/></svg></span><span class="ptab"><svg><use href="#ballcut"/></svg></span>
    </nav>
    <div class="ptitle"><svg class="ic"><use href="#secview"/></svg><span class="ptitle-text">Section View</span>
      <svg class="phelp" viewBox="0 0 16 16"><circle cx="8" cy="8" r="6.800" fill="#fff" stroke="#3c4a52" stroke-width="1.200"/><path d="M5.800 6.200c0-3 4.600-2.600 4.300 0C10 7.500 8 7.700 8 9.400M8 10.600v1.600" fill="none" stroke="#2e7fa5" stroke-width="1.700"/></svg></div>
    <div class="confirm">
      <svg viewBox="0 0 14 14"><path d="m.8 8 3.500 4L13 2" fill="none" stroke="#2f9a18" stroke-width="2.300"/></svg>
      <svg viewBox="0 0 14 14"><path d="m2 2 10 10M12 2 2 12" stroke="#e02410" stroke-width="2.300"/></svg>
    </div>
    <div class="pbody">
      <div class="groups">
        <section class="group g1">
          <h2>Drawing Section View<svg><use href="#up"/></svg></h2>
          <div class="field"><svg class="ic"><use href="#alet"/></svg><div class="input letter">A</div></div>
        </section>
        <section class="group g2">
          <h2>Section Method<svg><use href="#up"/></svg></h2>
          <div class="radio"><i class="r checked"></i>Planar</div>
          <div class="radio"><i class="r"></i>Zonal</div>
        </section>
        <section class="group g3">
          <h2>Section Options<svg><use href="#up"/></svg></h2>
          <p class="note">Offset perpendicular to:</p>
          <div class="radio ref"><i class="r checked"></i>Reference plane</div>
          <div class="radio ref"><i class="r"></i>Selected plane</div>
          <div class="check"><svg class="box" viewBox="0 0 13 13"><path d="m2 6 3.200 3.500L11 3" fill="none" stroke="#333" stroke-width="1.600"/></svg>Show section cap</div>
          <div class="check"><i class="box"></i>Keep cap color</div>
          <div class="check"><i class="box"></i>Graphics-only section</div>
        </section>
        <section class="group g4">
          <h2>Section 1<svg><use href="#up"/></svg></h2>
          <div class="planebtns"><span><svg><use href="#pl1"/></svg></span><span><svg><use href="#pl2"/></svg></span><span class="down"><svg><use href="#pl3"/></svg></span></div>
          <div class="field f-plane"><span class="flip"><svg><use href="#flip"/></svg></span><div class="pick">Right Plane</div></div>
          <div class="field f-dist"><svg class="ic"><use href="#dist"/></svg><div class="input">0.17524593mm</div><div class="spin"><svg><use href="#up"/></svg><svg><use href="#down"/></svg></div></div>
          <div class="field f-angle"><svg class="ic"><use href="#angle"/></svg><div class="input">347.15237593deg</div><div class="spin"><svg><use href="#up"/></svg><svg><use href="#down"/></svg></div></div>
        </section>
      </div>
      <div class="scroll"><svg><use href="#up"/></svg><div class="thumb"></div><svg class="sdown"><use href="#down"/></svg></div>
    </div>
  </aside>
  <div class="view">
    <div class="tree"><svg class="tri" viewBox="0 0 4 8"><path d="M0 0v8l4-4z" fill="#222"/></svg><svg class="ic"><use href="#partb"/></svg><span>LEAD &nbsp;(Default&lt;&lt;Default...</span></div>
    <svg class="model" viewBox="230 140 1136 554">
      <defs>
        <clipPath id="half"><path d="M849.600 165 740.900 645H600V165z"/></clipPath>
        <clipPath id="halfR"><path d="M849.600 165 740.900 645H1000V165z"/></clipPath>
        <filter id="blur" x="-30%" y="-30%" width="160%" height="160%"><feGaussianBlur stdDeviation="10"/></filter>
        <linearGradient id="gShaft" x1="798" y1="0" x2="887" y2="0" gradientUnits="userSpaceOnUse"><stop offset="0" stop-color="#fff3e0"/><stop offset="1" stop-color="#ffa12a"/></linearGradient>
        <linearGradient id="gStroke" x1="798" y1="0" x2="865" y2="0" gradientUnits="userSpaceOnUse"><stop offset="0" stop-color="#fff" stop-opacity="0"/><stop offset="1" stop-color="#222"/></linearGradient>
        <linearGradient id="gSlot"><stop offset="0" stop-color="#717985"/><stop offset="1" stop-color="#c3c9d4"/></linearGradient>
        <linearGradient id="gPlane" x1="0" y1="0" x2="1" y2="1"><stop offset="0" stop-color="#e9eef8"/><stop offset="1" stop-color="#e3e6f2"/></linearGradient>
      </defs>
      <g clip-path="url(#half)">
        <path d="M629.500 240.500h331v330h-331z" fill="#f6f9ff"/>
        <path d="M639.500 250h311v311h-311z" fill="url(#gPlane)"/>
      </g>
      <path d="M828.500 252A156 156 0 1 0 758.500 557z" fill="#000" opacity=".62" filter="url(#blur)"/>
      <g clip-path="url(#half)" fill="none">
        <circle cx="795.500" cy="405" r="158" fill="#ab4b4b" stroke="#160a0d"/>
        <circle cx="795.500" cy="405" r="156" stroke="#541f2b" stroke-width="3"/>
        <circle cx="795.500" cy="405" r="153.800" stroke="#160808" stroke-width="1"/>
        <circle cx="795.500" cy="405" r="152" stroke="#c56160" stroke-width="1"/>
        <circle cx="795.500" cy="405" r="150" stroke="#160808"/>
        <circle cx="795.500" cy="405" r="137.200" stroke="#130606" stroke-width="5.600"/>
        <circle cx="795.500" cy="405" r="137.200" stroke="#5b1d20" stroke-width="2.600"/>
        <circle cx="795.500" cy="405" r="133.800" stroke="#c56160" stroke-width="1"/>
        <circle cx="795.500" cy="405" r="132.200" stroke="#160808"/>
        <circle cx="795.500" cy="405" r="111.300" stroke="#160808" stroke-width="1.100"/>
        <path d="M721 323.500C742 302 772 295 795 295.500c9 0 17 1 26 3" stroke="#160606" stroke-width="3.400"/>
        <path d="M721 323.500C742 302 772 295 795 295.500c9 0 17 1 26 3" stroke="#411416" stroke-width="1"/>
        <path d="M721 323.500c22 25 46 41 82 50.500" stroke="#120606" stroke-width="3.600"/>
        <path d="M722 324.500c22 24 46 39 80 49" stroke="#5d2020" stroke-width="1.200"/>
        <path d="m826 280-20-2c-8 0-8 10-1 11l20 2z" fill="url(#gSlot)" stroke="#110808" stroke-width="1.200"/>
      </g>
      <g clip-path="url(#halfR)"><circle cx="795" cy="405" r="92" fill="none" stroke="#ff9c19" stroke-width="15"/></g>
      <path d="m799 403.500 88 18 2-4.500 27 16-30 3.500-.5-5.500L799 411z" fill="url(#gShaft)" stroke="url(#gStroke)"/>
      <path d="M629.500 240h331v331h-331z" fill="none" stroke="#5f8cf0" stroke-width="1.300"/>
      <path d="M639.500 250h311v311h-311z" fill="none" stroke="#102d72" stroke-width="1.300"/>
      <path d="M837 218 752 594" stroke="#e9dada" stroke-width="1"/>
      <path d="M837 218 752 594" stroke="#4d0d12" stroke-width="1.300" stroke-dasharray="6 1"/>
      <path d="M1265 164 1274.500 172.500 1289 157" fill="none" stroke="#d8ebd3" stroke-width="7"/>
      <path d="m1311.500 186.500 17 17M1328.500 186.500l-17 17" stroke="#f0cbc9" stroke-width="7.500" stroke-linecap="round"/>
      <path d="M270 632v-20" stroke="#111991" stroke-width="4"/><path d="M270 632v-20" stroke="#7474ff" stroke-width="2"/><path d="m270 605.500 4 9.500h-8z" fill="#1515bd"/>
      <path d="M266 636h-20" stroke="#8d1010" stroke-width="4"/><path d="M266 636h-20" stroke="#ef6060" stroke-width="2"/><path d="m240 636 9-4v8z" fill="#c41717"/>
      <circle cx="270" cy="636" r="4.500" fill="#14551b"/>
      <path d="M266 595.500h5l-5 8h5" fill="none" stroke="#00f"/><path d="m234 632 5 8M239 632l-5 8" stroke="#e01010"/>
    </svg>
    <div class="handle"><i class="dot"></i></div>
    <nav class="task"><span><svg><use href="#thome"/></svg></span><span><svg><use href="#books"/></svg></span><span><svg><use href="#folder"/></svg></span><span><svg><use href="#palette"/></svg></span><span class="sel"><svg><use href="#ball"/></svg></span><span><svg><use href="#plist"/></svg></span><span><svg><use href="#chat"/></svg></span></nav>
  </div>
</main>

<nav class="sheets">
  <div class="steps">
    <svg viewBox="0 0 14 14"><path d="M3 3v8M10 3v8L5 7z" stroke="#888" fill="#888"/></svg><svg viewBox="0 0 14 14"><path d="M9 3v8L4 7z" fill="#888"/></svg><svg viewBox="0 0 14 14"><path d="M5 3v8l5-4z" fill="#888"/></svg><svg viewBox="0 0 14 14"><path d="M11 3v8M4 3v8l5-4z" stroke="#888" fill="#888"/></svg>
  </div>
  <span class="sheet current">Model</span><span class="sheet motion">Motion Study 1</span>
</nav>
<footer class="status">
  <span class="hint">Set the section view properties or drag the section plane</span>
  <span class="cell empty"></span><span class="cell edit">Editing Part</span><span class="cell gap"></span><span class="cell units">MMGS</span>
  <svg class="upcaret" viewBox="0 0 6 4"><path d="M0 4h6L3 0z" fill="#888"/></svg>
  <svg class="tag" viewBox="0 0 18 16"><path d="m2 5 6-4 8 4 1 4-6 6-8-4z" fill="#eee" stroke="#444" stroke-width="1.200"/><path d="m2 5 9 5 5-5M11 10v5M3 8l8 5" fill="none" stroke="#444"/><circle cx="7" cy="4.500" r="2" fill="#fff" stroke="#444"/></svg>
</footer>
</body>
</html>
```
FILE: styles.css
```css
* { box-sizing: border-box; }
body { margin: 0; width: 1366px; height: 729px; overflow: hidden; display: flex; flex-direction: column; background: #fff; color: #000; font: 11px/13px "Noto Sans", sans-serif; white-space: nowrap; }
svg { display: block; flex: none; }
.defs { position: absolute; }
.ic { width: 19px; height: 19px; }
.caret { width: 6px; height: 4px; margin: 0 3px; color: #222; }
.caret.dim { color: #8a8a8a; }

/* title bar */
.titlebar { height: 31px; flex: none; display: flex; align-items: center; background: #f7f7f7; border-bottom: 1px solid #808080; }
.brand { width: 145px; height: 35px; margin: 0 0 0 10px; align-self: flex-start; display: flex; flex: none; z-index: 2; border: 1px solid #8e8e8e; border-top: 0; background: linear-gradient(165deg, #fff 35%, #d8d8d8); }
.ds { width: 28px; height: 28px; margin-left: 5px; }
.brand-name { display: flex; margin: 11px 0 0 4px; color: #d8261c; font: italic 15px/18px Inter, sans-serif; }
.brand-name b { font-weight: 800; width: 48px; letter-spacing: .6px; }
.brand-name i { font-weight: 300; letter-spacing: -.4px; }
.brand-arrow { width: 8px; height: 13px; margin: 0 0 0 7px; }
.quick { display: flex; align-items: center; height: 30px; margin-left: 5px; padding: 1px 0 0 31px; width: 384px; border-left: 1px solid #999; }
.quick span { display: flex; justify-content: center; flex: none; }
.quick span svg { width: 19px; height: 19px; }
.q-home { width: 22px; }
.q { width: 27px; }
.q.wide { width: 27px; }
.quick .q-gear { width: 25px; }
.doc-title { width: 458px; padding-left: 194px; letter-spacing: -.25px; }
.search { width: 202px; height: 23px; display: flex; flex: none; align-items: center; border: 1px solid #111; background: #eeeef4; }
.prompt { width: 15px; height: 15px; margin-left: 5px; }
.search-text { width: 142px; padding-left: 6px; color: #555; letter-spacing: -.3px; }
.search-text { letter-spacing: -.25px; }
.search-mag { width: 18px; height: 18px; margin-left: 6px; }
.search .caret { margin-left: 5px; }
.user { width: 14px; height: 18px; margin-left: 10px; }
.help { width: 12px; margin-left: 15px; font: bold 18px/20px "Noto Sans", sans-serif; color: #333; }
.help + .caret { margin-left: 7px; }
.win { display: flex; gap: 12px; margin-left: 8px; color: #333; }
.win svg, .docwin svg { width: 14px; height: 14px; }

/* command ribbon */
.ribbon { height: 87px; flex: none; display: flex; background: #f7f7f7; color: #b3b3b3; border-bottom: 1px solid #808080; }
.sep { width: 1px; height: 78px; margin-top: 6px; background: #c5c5c5; flex: none; }
.cmd { display: flex; flex-direction: column; align-items: center; flex: none; padding-top: 18px; text-align: center; letter-spacing: -.05px; }
.cmd span { margin-top: 1px; }
.cmd.tall { padding-top: 11px; }
.cmd.low span { margin-top: 14px; }
.drop { margin-top: 14px; }
.on { color: #000; }
.w-design { width: 53px; padding-left: 5px; }
.w-inter { width: 74px; }
.w-small { width: 52px; }
.w-mass { width: 60px; }
.w-sect { width: 64px; }
.w-sens { width: 42px; }
.w-perf { width: 78px; }
.w-active { width: 78px; padding-left: 2px; }
.w-dx { width: 88px; }
.w-simx { width: 94px; }
.w-flox { width: 62px; padding-left: 1px; }
.more { width: 10px; height: 8px; margin: 39px 0 0 3px; }
.stack { display: flex; flex-direction: column; flex: none; padding-top: 5px; letter-spacing: -.1px; }
.line { display: flex; align-items: center; height: 26px; gap: 7px; }
.s1 { width: 134px; }
.s2 { width: 134px; padding-left: 3px; letter-spacing: -.02px; }
.s3 { width: 144px; }
.s4 { width: 139px; letter-spacing: -.18px; }

/* document tabs and view toolbar */
.tabrow { height: 22px; flex: none; display: flex; position: relative; z-index: 1; }
.tabs { display: flex; width: 542px; height: 22px; flex: none; font-size: 12px; line-height: 21px; color: #222; }
.tab { text-align: center; background: #d3d3d3; border-right: 1px solid #808080; border-bottom: 1px solid #808080; letter-spacing: -.32px; padding-left: 1px; }
.tab.active { background: #f7f7f7; font-weight: 600; color: #444; border-bottom-color: #a5c6ca; padding-left: 0; }
.t1 { width: 60px; }
.t2 { width: 56px; }
.t3 { width: 63px; }
.t4 { width: 107px; }
.t5 { width: 133px; }
.t6 { width: 123px; }
.headsup { display: flex; align-items: center; height: 31px; margin-left: 87px; width: 600px; }
.headsup .caret { margin: 0 3px 0 4px; }
.h { display: flex; justify-content: center; flex: none; width: 26px; }
.h svg { width: 19px; height: 19px; }
.hw { width: 27px; }
.docwin { display: flex; align-items: center; gap: 12px; height: 30px; margin-left: 6px; color: #999; }

/* property panel */
.work { flex: none; height: 554px; display: flex; }
.panel { width: 230px; flex: none; background: #f7f7f7; border-right: 1px solid #808080; display: flex; flex-direction: column; }
.grip { height: 20px; width: 227px; display: flex; justify-content: center; align-items: center; padding: 4px 2px 0 0; border-bottom: 1px solid #b5b5b5; background: linear-gradient(#bbb, #bbb) 0 4px / 100% 1px no-repeat; }
.dot { display: block; width: 6px; height: 6px; border: 1px solid #8f8f8f; border-radius: 50%; background: #ccc; }
.ptabs { display: flex; width: 227px; height: 30px; padding: 4px 0 0 2px; border-bottom: 1px solid #999; flex: none; }
.ptab { width: 40px; height: 25px; display: flex; align-items: center; justify-content: center; background: #d3d3d3; border: 1px solid #808080; border-width: 1px 1px 0 0; }
.ptab.sel { background: #f7f7f7; height: 26px; }
.ptab svg { width: 19px; height: 19px; margin-left: 1px; }
.ptitle { height: 32px; flex: none; display: flex; align-items: center; padding-left: 9px; }
.ptitle-text { width: 173px; padding: 1px 0 0 6px; font-size: 12px; font-weight: 600; color: #1d2635; letter-spacing: -.1px; }
.phelp { width: 16px; height: 16px; margin-left: -1px; }
.confirm { height: 31px; width: 227px; flex: none; display: flex; gap: 14px; padding: 4px 0 0 8px; border-bottom: 1px solid #a0a0a0; }
.confirm svg { width: 14px; height: 14px; }
.pbody { height: 439px; width: 227px; display: flex; border-bottom: 1px solid #999; }
.groups { width: 200px; margin-left: 5px; flex: none; }
.group { border-bottom: 1px solid #a9a9a9; }
.group h2 { display: flex; justify-content: space-between; align-items: center; height: 20px; margin: 0; padding: 0 3px 0 4px; font: 600 11px/13px "Noto Sans", sans-serif; color: #444; letter-spacing: -.14px; }
.group h2 svg { width: 10px; height: 6px; color: #666; }
.g1 { height: 64px; padding-top: 5px; }
.g2 { height: 76px; padding-top: 3px; }
.g3 { height: 164px; padding-top: 3px; }
.g4 { border: 0; padding-top: 3px; }
.field { display: flex; padding-left: 6px; }
.input { width: 135px; height: 23px; margin-left: 9px; padding: 2px 5px; border: 1px solid #6f6f6f; background: #fff; }
.g4 .input { letter-spacing: -.2px; }
.g1 .field { margin-top: 4px; align-items: center; }
.radio { display: flex; align-items: center; gap: 3px; height: 22px; padding-left: 34px; }
.radio.ref { height: 24px; }
.r { width: 13px; height: 13px; border: 1px solid #333; border-radius: 50%; background: #fff; }
.r.checked { background: radial-gradient(circle, #222 3.200px, #fff 4px); }
.g3 .note { margin: 3px 0 5px; padding-left: 4px; height: 15px; line-height: 15px; }
.radio.ref + .check { margin-top: 3px; }
.check { display: flex; align-items: center; gap: 3px; height: 19px; padding-left: 4px; }
.box { width: 13px; height: 13px; border: 1px solid #333; background: #fff; }
.planebtns { display: flex; gap: 2px; padding: 4px 0 0 34px; }
.planebtns span { width: 24px; height: 24px; display: flex; align-items: center; justify-content: center; border: 1px solid #8a8a8a; background: #fff; }
.planebtns .down { margin-left: 2px; background: #b5b5b5; border-color: #666; }
.planebtns svg { width: 19px; height: 19px; }
.f-plane { padding-left: 4px; margin-top: 2px; }
.flip { width: 24px; height: 24px; display: flex; align-items: center; justify-content: center; border: 1px solid #777; background: #b5b5b5; }
.flip svg { width: 19px; height: 19px; }
.pick { width: 147px; height: 23px; margin-left: 6px; padding: 0 3px; border: 2px solid #57b0ea; background: #0078d7; color: #fff; line-height: 16px; }
.f-dist { margin-top: 4px; align-items: center; }
.f-dist .input { letter-spacing: -.45px; }
.g4 .f-dist .input { letter-spacing: -.4px; }
.f-angle { margin-top: 3px; align-items: center; }
.spin { display: flex; flex-direction: column; gap: 6px; width: 17px; align-items: center; color: #555; }
.spin svg { width: 8px; height: 5px; }
.scroll { width: 15px; margin-left: 4px; background: #f0f0f0; display: flex; flex-direction: column; align-items: center; color: #555; }
.scroll svg { width: 9px; height: 6px; margin-top: 7px; }
.thumb { width: 15px; height: 159px; margin-top: 5px; background: #cbcbcb; }
.scroll .sdown { margin: auto 0 7px; }

/* graphics area */
.view { position: relative; width: 1136px; height: 554px; background: #fff; }
.model { width: 1136px; height: 554px; }
.tree { position: absolute; left: 5px; top: 6px; height: 19px; display: flex; align-items: center; }
.tri { width: 4px; height: 8px; margin-right: 13px; }
.tree span { margin-left: 4px; letter-spacing: .22px; }
.handle { position: absolute; left: -1px; top: 246px; width: 9px; height: 39px; border: 1px solid #808080; border-left: 0; background: #f7f7f7; display: flex; align-items: center; justify-content: center; }
.task { position: absolute; right: 0; top: 29px; width: 26px; border: 1px solid #808080; border-right: 0; background: #d3d3d3; }
.task span { height: 24px; display: flex; align-items: center; justify-content: center; border-bottom: 1px solid #808080; }
.task span:first-child { height: 23px; }
.task span:last-child { border: 0; height: 23px; }
.task .sel { background: #f7f7f7; }
.task svg { width: 19px; height: 19px; margin-right: 1px; }

/* model tabs and status bar */
.sheets { height: 16px; flex: none; display: flex; border-top: 1px solid #808080; border-bottom: 1px solid #999; background: #f7f7f7; }
.steps { width: 67px; display: flex; gap: 2px; padding-left: 2px; background: #bbb; border-right: 1px solid #808080; }
.steps svg { width: 14px; height: 14px; border: 1px solid #999; }
.sheet { text-align: center; line-height: 12px; }
.current { width: 56px; padding-left: 3px; font-weight: 700; font-size: 12px; letter-spacing: -.4px; background: #f7f7f7; }
.motion { width: 109px; padding-right: 8px; background: #d3d3d3; border: 1px solid #808080; border-width: 0 1px; letter-spacing: .2px; }
.status { height: 19px; flex: none; display: flex; align-items: center; background: #f7f7f7; border-bottom: 1px solid #333; }
.hint { width: 1093px; padding-left: 1px; letter-spacing: .07px; }
.cell { height: 16px; line-height: 18px; border-left: 1px solid #ccc; }
.empty { width: 8px; }
.edit { width: 71px; padding-left: 3px; }
.gap { width: 16px; }
.units { width: 87px; padding-left: 31px; color: #aaa; }
.upcaret { width: 6px; height: 4px; }
.tag { width: 18px; height: 16px; margin-left: 64px; }
```
